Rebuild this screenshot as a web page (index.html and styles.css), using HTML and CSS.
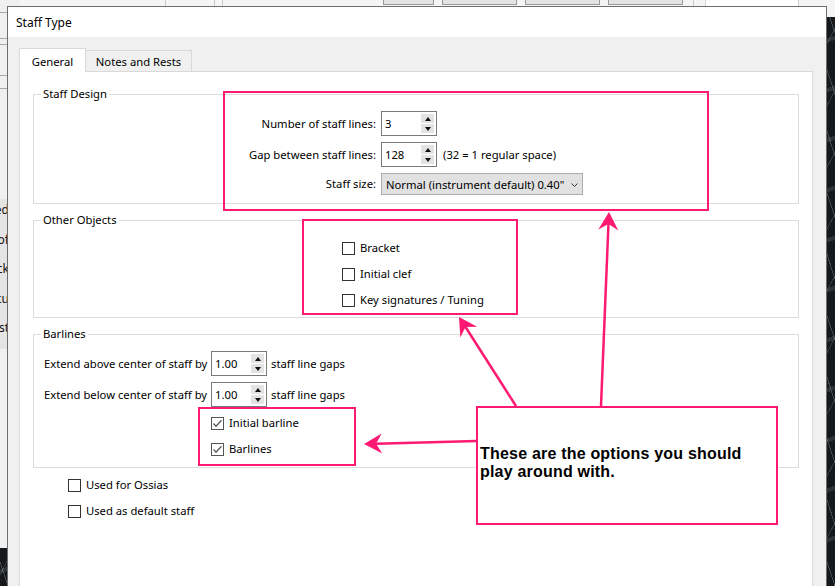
FILE: index.html
```html
<!DOCTYPE html>
<html lang="en">
<head>
<meta charset="utf-8">
<title>Staff Type</title>
<link rel="stylesheet" href="styles.css">
</head>
<body>
<div class="screen">
  <div class="bg-top">
    <span class="seg s1"></span>
    <span class="seg s2"></span>
    <span class="seg s3"></span>
    <span class="bbtn b1"></span>
    <span class="bbtn b2"></span>
    <span class="bbtn b3"></span>
    <span class="bbtn b4"></span>
    <span class="seg s4"></span>
    <span class="bwin"></span>
  </div>

  <div class="bg-left">
    <div class="rows">
      <div class="row r1"></div>
      <div class="row r2"></div>
      <div class="row r3"></div>
      <div class="row r4"></div>
      <div class="row r5"></div>
    </div>
    <div class="frags">
      <div class="frag">Shared</div>
      <div class="frag">Proof</div>
      <div class="frag">Check</div>
      <div class="frag">Focu</div>
      <div class="frag">First</div>
    </div>
  </div>

  <div class="marble m-right"></div>
  <div class="marble m-left"></div>

  <div class="dialog">
    <div class="titlebar">Staff Type</div>
    <div class="dlg-body">
      <div class="tabs">
        <div class="tab active">General</div>
        <div class="tab">Notes and Rests</div>
      </div>
      <div class="panel">
        <fieldset class="group g-design">
          <legend>Staff Design</legend>
          <div class="design-grid">
            <span class="lbl">Number of staff lines:</span>
            <div class="ctl">
              <div class="spin"><span class="val">3</span><span class="btns"><i class="up"></i><i class="dn"></i></span></div>
            </div>
            <span class="lbl">Gap between staff lines:</span>
            <div class="ctl">
              <div class="spin"><span class="val">128</span><span class="btns"><i class="up"></i><i class="dn"></i></span></div>
              <span class="note">(32 = 1 regular space)</span>
            </div>
            <span class="lbl">Staff size:</span>
            <div class="ctl">
              <div class="select">
                <span>Normal (instrument default) 0.40"</span>
                <svg class="chev" width="7" height="4" viewBox="0 0 7 4"><polyline points="0.5,0.5 3.5,3.5 6.5,0.5" fill="none" stroke="#333" stroke-width="1"/></svg>
              </div>
            </div>
          </div>
        </fieldset>

        <fieldset class="group g-objects">
          <legend>Other Objects</legend>
          <div class="checks obj-checks">
            <label class="chk"><span class="box"></span>Bracket</label>
            <label class="chk"><span class="box"></span>Initial clef</label>
            <label class="chk"><span class="box"></span>Key signatures / Tuning</label>
          </div>
        </fieldset>

        <fieldset class="group g-bar">
          <legend>Barlines</legend>
          <div class="bar-grid">
            <span class="blbl">Extend above center of staff by</span>
            <div class="spin"><span class="val">1.00</span><span class="btns"><i class="up"></i><i class="dn"></i></span></div>
            <span>staff line gaps</span>
            <span class="blbl">Extend below center of staff by</span>
            <div class="spin"><span class="val">1.00</span><span class="btns"><i class="up"></i><i class="dn"></i></span></div>
            <span>staff line gaps</span>
            <label class="chk wide"><span class="box on"><svg width="11" height="11" viewBox="0 0 11 11"><polyline points="1.5,5.5 4,8.2 9.5,2.2" fill="none" stroke="#5a5a5a" stroke-width="1.3"/></svg></span>Initial barline</label>
            <label class="chk wide"><span class="box on"><svg width="11" height="11" viewBox="0 0 11 11"><polyline points="1.5,5.5 4,8.2 9.5,2.2" fill="none" stroke="#5a5a5a" stroke-width="1.3"/></svg></span>Barlines</label>
          </div>
        </fieldset>

        <div class="checks bottom-checks">
          <label class="chk"><span class="box"></span>Used for Ossias</label>
          <label class="chk"><span class="box"></span>Used as default staff</label>
        </div>
      </div>
    </div>
  </div>

  <svg class="annot" width="835" height="586" viewBox="0 0 835 586">
    <g fill="none" stroke="#fe1a72" stroke-width="2">
      <rect x="224" y="92" width="484" height="118"/>
      <rect x="303" y="220" width="214" height="94"/>
      <rect x="199" y="408" width="156" height="57"/>
    </g>
    <g stroke="#fe1a72" stroke-width="2.5" fill="none">
      <line x1="601" y1="406" x2="608.5" y2="223"/>
      <line x1="516" y1="406" x2="465.5" y2="327"/>
      <line x1="477" y1="441" x2="376" y2="443.7"/>
    </g>
    <g fill="#fe1a72">
      <polygon points="609,212 618.3,230.4 608.5,224 598.3,229.6"/>
      <polygon points="459,317 477.1,326.8 465.5,327.1 460.3,337.6"/>
      <polygon points="364,444 382.3,453.5 376,443.7 381.7,433.5"/>
    </g>
  </svg>

  <div class="callout">These are the options you should<br>play around with.</div>
</div>
</body>
</html>
```

FILE: styles.css
```css
* { box-sizing: border-box; }
html, body { margin: 0; padding: 0; }
body {
  background: #ececec;
  font-family: "Noto Sans", "Segoe UI", Arial, sans-serif;
  font-size: 11.25px;
  line-height: 16px;
  color: #000;
}
.screen {
  position: relative;
  width: 835px;
  height: 586px;
  overflow: hidden;
  background: #ececec;
}

/* ---------- background application ---------- */
.bg-top {
  position: absolute;
  left: 0;
  top: 0;
  width: 835px;
  height: 18px;
  display: flex;
  background: #f5f5f5;
}
.seg { height: 100%; border-right: 1px solid #c9c9c9; flex: none; }
.s1 { width: 166px; }
.s2 { width: 49px; }
.s3 { width: 8px; margin-right: 160px; }
.bbtn {
  flex: none;
  height: 6px;
  margin-top: -1px;
  border: 1px solid #9a9a9a;
  background: #e4e4e4;
  margin-right: 8px;
}
.b1 { width: 51px; }
.b2 { width: 75px; }
.b3 { width: 75px; }
.b4 { width: 75px; }
.s4 { width: 3px; margin-right: 11px; }
.bwin {
  flex: none;
  width: 94px;
  height: 18px;
  background: #fff;
  border-left: 1px solid #d0d0d0;
  border-right: 1px solid #cfcfcf;
}

.bg-left {
  position: absolute;
  left: 0;
  top: 0;
  width: 20px;
  height: 586px;
  background: #f0f0f0;
  display: flex;
  flex-direction: column;
}
.rows { display: flex; flex-direction: column; }
.row { border-bottom: 1px solid #a8a8a8; flex: none; }
.r1 { height: 13px; }
.r2 { height: 26px; }
.r3 { height: 6px; }
.r4 { height: 31px; }
.r5 { height: 13px; }
.frags {
  margin-top: 110px;
  width: 9px;
  background: #e4e4e4;
  padding-top: 3px;
  display: flex;
  flex-direction: column;
  gap: 13.5px;
  height: 150px;
  font-size: 12px;
}
.frag {
  height: 16px;
  display: flex;
  justify-content: flex-end;
  overflow: hidden;
  white-space: nowrap;
  color: #111;
}

.marble {
  position: absolute;
  background-color: #15191c;
  background-image:
    repeating-linear-gradient(72deg, transparent 0 7px, rgba(170, 185, 190, 0.3) 7px 8px, transparent 8px 19px),
    repeating-linear-gradient(118deg, transparent 0 12px, rgba(150, 165, 170, 0.25) 12px 13px, transparent 13px 29px),
    repeating-linear-gradient(160deg, transparent 0 20px, rgba(100, 115, 120, 0.3) 20px 24px, transparent 24px 47px);
}
.m-right { left: 827px; top: 17px; width: 8px; height: 569px; }
.m-left { left: 0; top: 548px; width: 8px; height: 38px; }

/* ---------- dialog ---------- */
.dialog {
  position: absolute;
  left: 7px;
  top: 6px;
  width: 820px;
  height: 600px;
  border: 1px solid #6d6d6d;
  background: #f0f0f0;
  display: flex;
  flex-direction: column;
}
.titlebar {
  height: 30px;
  flex: none;
  background: #fff;
  padding-left: 8px;
  line-height: 31px;
  font-size: 12px;
}
.dlg-body {
  flex: 1;
  display: flex;
  flex-direction: column;
  padding: 11px 13px 0 11px;
}
.tabs {
  display: flex;
  align-items: flex-end;
  height: 23px;
  flex: none;
  position: relative;
  z-index: 1;
}
.tab {
  border: 1px solid #d9d9d9;
  border-bottom: none;
  text-align: center;
  white-space: nowrap;
  background: #f0f0f0;
}
.tab.active {
  width: 67px;
  height: 24px;
  margin-bottom: -1px;
  padding-top: 4px;
  line-height: 18px;
  background: #fff;
  position: relative;
  z-index: 2;
}
.tab:not(.active) {
  width: 107px;
  height: 21px;
  margin-left: -1px;
  padding-top: 1px;
  line-height: 20px;
}
.panel {
  flex: 1;
  background: #fff;
  border: 1px solid #d9d9d9;
  padding: 14px 13px 0 13px;
}

.group {
  margin: 0;
  padding: 0;
  border: 1px solid #dcdcdc;
  min-width: 0;
}
.group legend {
  padding: 0 2px;
  margin-left: 7px;
  line-height: 16px;
}
.g-objects, .g-bar { margin-top: 8px; }

.design-grid {
  display: grid;
  grid-template-columns: 342px auto;
  column-gap: 5px;
  row-gap: 6px;
  align-items: center;
  padding: 9px 0 8px 0;
}
.lbl { text-align: right; white-space: nowrap; }
.ctl { display: flex; align-items: center; }
.note { margin-left: 6px; white-space: nowrap; }

.spin {
  width: 56px;
  height: 25px;
  border: 1px solid #7a7a7a;
  background: #fff;
  display: flex;
  align-items: center;
  justify-content: space-between;
  padding: 2px 2px 2px 3px;
}
.val { padding-top: 1px; }
.btns {
  align-self: stretch;
  width: 13px;
  display: flex;
  flex-direction: column;
  gap: 1px;
}
.btns i {
  flex: 1;
  background: #e3e3e3;
  display: flex;
  align-items: center;
  justify-content: center;
}
.btns i::before {
  content: "";
  border-left: 3.5px solid transparent;
  border-right: 3.5px solid transparent;
}
.btns .up::before { border-bottom: 4px solid #111; }
.btns .dn::before { border-top: 4px solid #111; }

.select {
  width: 202px;
  height: 22px;
  background: #e1e1e1;
  border: 1px solid #adadad;
  display: flex;
  align-items: center;
  justify-content: space-between;
  padding: 1px 4px 0 4px;
  white-space: nowrap;
}
.chev { display: block; }

.checks { display: flex; flex-direction: column; gap: 6px; }
.obj-checks { padding: 10px 0 7px 308px; }
.chk {
  display: flex;
  align-items: center;
  height: 20px;
  white-space: nowrap;
}
.box {
  width: 13px;
  height: 13px;
  flex: none;
  border: 1px solid #333;
  background: #fff;
  margin-right: 5px;
  display: flex;
  align-items: center;
  justify-content: center;
}
.box.on { border-color: #555; }
.box svg { display: block; }

.bar-grid {
  display: grid;
  grid-template-columns: 163px 56px auto;
  justify-content: start;
  column-gap: 4px;
  row-gap: 6px;
  align-items: center;
  padding: 9px 0 8px 10px;
}
.blbl { white-space: nowrap; }
.chk.wide { grid-column: 2 / 4; }

.bottom-checks { padding: 7px 0 0 35px; }

/* ---------- annotations ---------- */
.annot {
  position: absolute;
  left: 0;
  top: 0;
  pointer-events: none;
}
.callout {
  position: absolute;
  left: 476px;
  top: 406px;
  width: 302px;
  height: 119px;
  border: 2px solid #fe1a72;
  background: #fff;
  padding: 37px 0 0 2px;
  font-family: "Liberation Sans", Arial, sans-serif;
  font-weight: bold;
  font-size: 16px;
  line-height: 18px;
  letter-spacing: 0.2px;
  color: #000;
}
```
